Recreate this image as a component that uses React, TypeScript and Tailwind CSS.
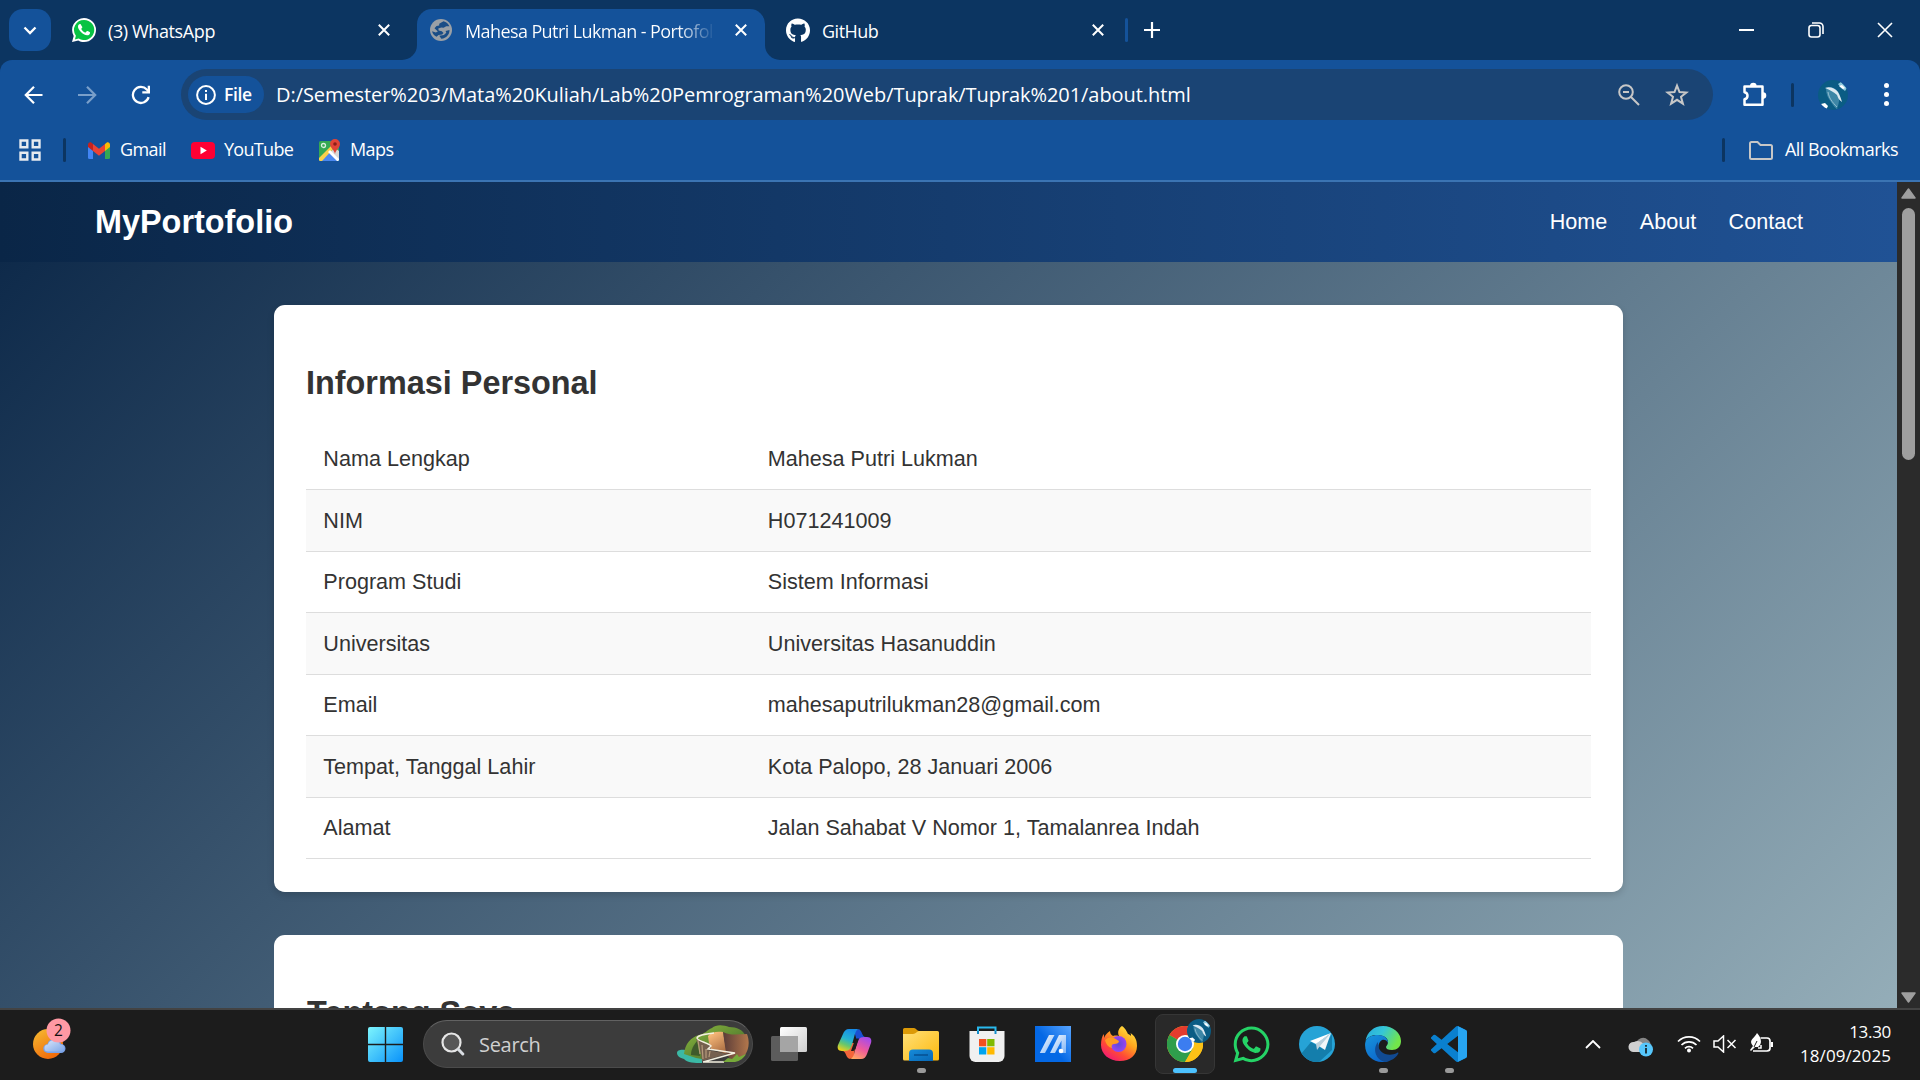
import type { ReactNode } from "react";
import { FaGithub, FaWhatsapp } from "react-icons/fa";

const UI = "font-['Open_Sans','Noto_Sans',sans-serif]";

const rows: [string, string][] = [
  ["Nama Lengkap", "Mahesa Putri Lukman"],
  ["NIM", "H071241009"],
  ["Program Studi", "Sistem Informasi"],
  ["Universitas", "Universitas Hasanuddin"],
  ["Email", "mahesaputrilukman28@gmail.com"],
  ["Tempat, Tanggal Lahir", "Kota Palopo, 28 Januari 2006"],
  ["Alamat", "Jalan Sahabat V Nomor 1, Tamalanrea Indah"],
];

function CloseGlyph({ className = "" }: { className?: string }) {
  return (
    <svg viewBox="0 0 12 12" className={`h-3 w-3 shrink-0 ${className}`}>
      <path d="M.8.8l10.4 10.4M11.2.8L.8 11.2" stroke="#fff" strokeWidth="2" />
    </svg>
  );
}

function WhatsAppTabIcon() {
  return (
    <svg viewBox="0 0 24 24" className="h-6 w-6 shrink-0">
      <path d="M12 0a12 12 0 0 1 0 24c-2.200 0-4-.5-5.700-1.500L0 24l1.700-6A12 12 0 0 1 12 0z" fill="#fff" />
      <path d="M12 1.900a10.100 10.100 0 1 1-5.300 18.600L2.900 21.400l1-3.700A10 10 0 0 1 12 1.900z" fill="#07c343" />
      <path d="M8.900 6.700c-.3-.6-.5-.6-.9-.6-.9 0-2 1-2 2.700 0 1.300.9 3 2.700 4.900 2 2.100 4.300 3.600 6.400 3.600 1.700 0 2.700-1.100 2.900-2.100.1-.5.100-.9-.1-1-.3-.2-2-1-2.400-1.200-.3-.1-.6-.1-.8.2l-1 1.200c-.2.200-.4.300-.7.100-1.500-.7-2.800-1.900-3.600-3.300-.2-.3-.1-.5.100-.7l.8-1c.1-.2.100-.4 0-.6z" fill="#fff" />
    </svg>
  );
}

function Globe() {
  return (
    <svg viewBox="0 0 22 22" className="h-[22px] w-[22px] shrink-0">
      <circle cx="11" cy="11" r="11" fill="#9aa0a6" />
      <path d="M13.500 2.300c2.800.7 4.800 2.400 5.900 5h-3.200l-2.600 1.500-2.300-.4-3 1.200.4 2 3.100.6 1.700 1.700-1.400 1.700-3.600.5-1.900 1.700c-2.500-1.200-4.100-3.200-4.500-5.600l3.700 1.200 2.100-1-3.400-3.100 2-2.400 2.700-.4V4.700z" fill="#1a4d86" />
      <path d="M9.300 16.800l4.600-.7 2.400-2.300-.7-1.700 3.900-1.200c.1 4.400-3 8.300-8.200 8.800z" fill="#1a4d86" />
    </svg>
  );
}

function Dolphin({ className = "" }: { className?: string }) {
  return (
    <svg viewBox="0 0 30 30" className={className}>
      <defs>
        <clipPath id="disc"><circle cx="15" cy="15" r="15" /></clipPath>
      </defs>
      <g clipPath="url(#disc)">
        <rect width="30" height="30" fill="#0a5c84" />
        <path d="M8 9c3-3 9-2 12 3 1 4 2 7 0 14-1 2-1 3 0 4-3-2-5-5-7-8-3-4-5-8-5-13z" fill="#3d86a6" />
        <path d="M7 8c4-2 10 0 13 4 2 3 3 7 4 10-3-2-4-4-5-7-3-3-7-5-12-7z" fill="#dbe9f1" />
        <path d="M10 12c1 6 4 10 9 15" stroke="#93bfd2" fill="none" strokeWidth="1" />
        <path d="M20 4l3-2 6 6-2 3-4-3z" fill="#8cc7dd" /><path d="M21 6l3-1 3 3-2 1z" fill="#fff" />
        <path d="M3 24l4-1 3 3-2 4-5-3z" fill="#fff" />
      </g>
    </svg>
  );
}

function Tabs() {
  return (
    <div className="flex h-[60px] w-full items-end text-[18px] text-white">
      <div className="ml-[9px] mb-[9px] flex h-[42px] w-[42px] items-center justify-center rounded-[14px] bg-[#14529a]">
        <svg viewBox="0 0 14 9" className="h-[9px] w-[14px]"><path d="M1.500 1.500L7 7l5.500-5.500" fill="none" stroke="#fff" strokeWidth="2.300" /></svg>
      </div>
      <div className="ml-[21px] flex h-[60px] w-[330px] items-center">
        <WhatsAppTabIcon />
        <span className="ml-3 w-[270px] whitespace-nowrap pt-[3px] tracking-[-0.38px]">(3) WhatsApp</span>
        <CloseGlyph />
      </div>
      <div className="h-[15px] w-[15px] bg-[#14529a]"><div className="h-full w-full rounded-br-[15px] bg-[#0c3561]" /></div>
      <div className="flex h-[51px] w-[348px] items-center rounded-t-[15px] bg-[#14529a] pl-[13px] pb-[9px]">
        <Globe />
        <span className="ml-[13px] w-[250px] overflow-hidden whitespace-nowrap bg-linear-to-r from-white from-85% to-transparent bg-clip-text pt-[3px] tracking-[-0.6px] text-transparent">Mahesa Putri Lukman - Portofolio</span>
        <CloseGlyph className="ml-5" />
      </div>
      <div className="h-[15px] w-[15px] bg-[#14529a]"><div className="h-full w-full rounded-bl-[15px] bg-[#0c3561]" /></div>
      <div className="ml-[6px] flex h-[60px] w-[318px] items-center">
        <FaGithub className="h-[25px] w-6" />
        <span className="ml-3 w-[270px] pt-[3px] tracking-[-0.5px]">GitHub</span>
        <CloseGlyph />
      </div>
      <div className="mb-[18px] ml-[21px] h-6 w-[3px] rounded bg-[#14529a]" />
      <svg viewBox="0 0 16 16" className="mb-[22px] ml-4 h-4 w-4"><path d="M8 0v16M0 8h16" stroke="#fff" strokeWidth="2.200" /></svg>
      <div className="mb-[18px] ml-auto mr-[27px] flex h-6 items-center">
        <div className="h-[2px] w-[15px] bg-white" />
        <svg viewBox="0 0 16 16" className="ml-[54px] h-4 w-4" fill="none" stroke="#fff" strokeWidth="1.600"><rect x="1" y="3.500" width="11" height="11.500" rx="2.500" /><path d="M4 1h7.500A3.500 3.500 0 0 1 15 4.500V12" /></svg>
        <svg viewBox="0 0 16 16" className="ml-[53px] h-4 w-4"><path d="M1 1l14 14M15 1L1 15" stroke="#fff" strokeWidth="1.600" /></svg>
      </div>
    </div>
  );
}

function Toolbar() {
  return (
    <div className="flex h-[69px] items-center text-white">
      <svg viewBox="0 0 20 20" className="ml-[24px] h-5 w-5" fill="none" stroke="#fff" strokeWidth="2.200"><path d="M18.500 10H2M10 1.800L1.800 10l8.200 8.200" /></svg>
      <svg viewBox="0 0 20 20" className="ml-[33px] h-5 w-5" fill="none" stroke="#799fca" strokeWidth="2.200"><path d="M1 10h17M10 1.800l8.200 8.200-8.200 8.200" /></svg>
      <svg viewBox="0 0 20 20" className="ml-[34px] h-5 w-5"><path d="M17.600 12.200A8 8 0 1 1 15.800 4.500L18 6.800" fill="none" stroke="#fff" strokeWidth="2.300" /><path d="M19 .8v7.700h-7.700V6.200h5.400V.8z" fill="#fff" /></svg>
      <div className="ml-[30px] flex h-[51px] w-[1532px] items-center rounded-full bg-[#1a4474]">
        <div className="ml-[7px] flex h-[37px] w-[76px] items-center rounded-full bg-[#14529a] pl-2">
          <svg viewBox="0 0 20 20" className="h-5 w-5"><circle cx="10" cy="10" r="8.900" fill="none" stroke="#fff" strokeWidth="2" /><path d="M9 8.800h2V15H9zM9 5h2v2H9z" fill="#fff" /></svg>
          <span className="ml-2 text-[17.500px] font-semibold tracking-[-0.4px]">File</span>
        </div>
        <span className="ml-[12px] w-[1342px] whitespace-nowrap text-[20px] tracking-[-0.07px]">D:/Semester%203/Mata%20Kuliah/Lab%20Pemrograman%20Web/Tuprak/Tuprak%201/about.html</span>
        <svg viewBox="0 0 22 22" className="h-[22px] w-[22px]" fill="none" stroke="#c7c7c7" strokeWidth="2"><circle cx="8" cy="8" r="6.800" /><path d="M13 13l8 8M5 8h6" /></svg>
        <svg viewBox="0 0 24 24" className="ml-[25px] h-6 w-6" fill="none" stroke="#c7c7c7" strokeWidth="2"><path d="M12 2.600l2.500 6.500 6.900.4-5.400 4.300 1.900 6.900L12 16.800l-5.900 3.900L8 13.800 2.600 9.500l6.900-.4z" /></svg>
      </div>
      <svg viewBox="0 0 26 26" className="ml-[28px] h-[26px] w-[26px]"><path d="M3.500 4.500h18v18.300h-18v-5.600c2-.4 3-1.700 3-3.500s-1-3.200-3-3.500z" fill="none" stroke="#fff" strokeWidth="2.500" strokeLinejoin="round" /><path d="M9 4a3.300 3.300 0 0 1 6.600 0zM22 10.300a3.300 3.300 0 0 1 0 6.600z" fill="#fff" /></svg>
      <div className="ml-[24px] h-6 w-[3px] rounded bg-[#0c3561]" />
      <Dolphin className="ml-[24px] h-[30px] w-[30px]" />
      <div className="ml-[36px] flex flex-col gap-[4px]">
        <i className="h-[5px] w-[5px] rounded-full bg-white" /><i className="h-[5px] w-[5px] rounded-full bg-white" /><i className="h-[5px] w-[5px] rounded-full bg-white" />
      </div>
    </div>
  );
}

function Bookmarks() {
  return (
    <div className="flex h-[42px] items-center text-[18px] tracking-[-0.6px] text-white">
      <svg viewBox="0 0 22 22" className="ml-[19px] h-[22px] w-[22px]" fill="none" stroke="#e6eaf0" strokeWidth="2.400"><path d="M1.500 1.500h6.800v6.800H1.500zM13.700 1.500h6.800v6.800h-6.800zM1.500 13.700h6.800v6.800H1.500zM13.700 13.700h6.800v6.800h-6.800z" /></svg>
      <div className="ml-[22px] h-6 w-[3px] rounded bg-[#0c3561]" />
      <svg viewBox="0 0 22 17" className="ml-[22px] h-[17px] w-[22px]">
        <path d="M0 3v12.300A1.500 1.500 0 0 0 1.500 17H5V7z" fill="#4285f4" /><path d="M17 7v10h3.500a1.500 1.500 0 0 0 1.500-1.500V3z" fill="#34a853" />
        <path d="M0 2.800V5l5 4V2L3.500.7C2-.5 0 .6 0 2.800z" fill="#c5221f" /><path d="M17 2v7l5-4V2.800C22 .6 20-.5 18.500.7z" fill="#fbbc04" /><path d="M5 9V2l6 4.700L17 2v7l-6 4.700z" fill="#ea4335" />
      </svg>
      <span className="ml-[10px] w-[71px] pb-px">Gmail</span>
      <svg viewBox="0 0 24 17" className="h-[17px] w-6"><rect width="24" height="17" rx="4" fill="#ff0033" /><path d="M9.500 4.800l6.300 3.700-6.300 3.700z" fill="#fff" /></svg>
      <span className="ml-[9px] w-[95px] pb-px tracking-[-0.7px]">YouTube</span>
      <svg viewBox="0 0 22 22" className="h-[22px] w-[22px]">
        <defs><clipPath id="mapc"><rect x="0" y="2" width="20" height="20" rx="1.500" /></clipPath></defs>
        <g clipPath="url(#mapc)"><rect y="2" width="20" height="20" fill="#35a853" /><path d="M0 22L10 12l10 10z" fill="#4a87ee" /><path d="M11 13l5-4 4 3v9z" fill="#d8d8d8" /><path d="M0 19L14 5l2 3L3 22H0z" fill="#fbd04a" /><path d="M9 13l9 9h2v-2L11 11z" fill="#fff" /></g>
        <circle cx="4.500" cy="6.500" r="2" fill="none" stroke="#d9f0de" strokeWidth="1.300" />
        <path d="M16 0a5 5 0 0 1 5 5c0 4-4 5-5 10-1-5-5-6-5-10a5 5 0 0 1 5-5z" fill="#e04437" /><circle cx="16" cy="5" r="1.800" fill="#8b1e19" />
      </svg>
      <span className="ml-[9px] pb-px">Maps</span>
      <div className="ml-auto h-6 w-[3px] rounded bg-[#0c3561]" />
      <svg viewBox="0 0 24 19" className="ml-6 h-[19px] w-6" fill="none" stroke="#c7c7c7" strokeWidth="2"><path d="M1 2.500A1.500 1.500 0 0 1 2.500 1h6l3 3h10A1.500 1.500 0 0 1 23 5.500v11a1.500 1.500 0 0 1-1.500 1.500h-19A1.500 1.500 0 0 1 1 16.500z" /></svg>
      <span className="ml-3 mr-[22px] w-[113px] whitespace-nowrap pb-px tracking-[-0.54px]">All Bookmarks</span>
    </div>
  );
}

function Page() {
  return (
    <div className="flex h-[826px] w-full">
      <div className="h-full w-[1897px] overflow-hidden bg-[linear-gradient(135deg,#0a2647,#94adb8)] font-['Liberation_Sans',Arial,sans-serif] text-[21.6px] text-[#333]">
        <header className="flex h-20 items-center justify-between bg-[linear-gradient(90deg,#0a2647,#205295)] pr-[94px] pl-[95px] text-white">
          <h1 className="text-[32.4px] font-bold">MyPortofolio</h1>
          <nav className="flex gap-[32.4px]"><a>Home</a><a>About</a><a>Contact</a></nav>
        </header>
        <section className="mr-auto ml-[274px] mt-[43px] h-[587px] w-[1349px] rounded-[10.8px] bg-white px-8 pt-[52px] shadow-[0_3px_7px_rgba(0,0,0,0.15)]">
          <h2 className="h-[71.5px] text-[32.4px] leading-[52px] font-bold">Informasi Personal</h2>
          <div>
            {rows.map(([label, value]) => (
              <div key={label} className="flex h-[61.5px] items-center border-b border-[#ddd] pt-px even:bg-[#f9f9f9]">
                <span className="w-[444.5px] pl-[17.3px]">{label}</span>
                <span className="pl-[17.3px]">{value}</span>
              </div>
            ))}
          </div>
        </section>
        <section className="ml-[274px] mt-[43px] h-[400px] w-[1349px] rounded-[10.8px] bg-white px-[33px] pt-[52px]">
          <h2 className="text-[32.4px] leading-[52px] font-bold">Tentang Saya</h2>
        </section>
      </div>
      <div className="flex h-full w-[23px] flex-col items-center bg-[#2b2b2b] pt-[6px]">
        <svg viewBox="0 0 15 11" className="h-[11px] w-[15px]"><path d="M7.500 1L14 10H1z" fill="#9f9f9f" stroke="#9f9f9f" strokeWidth="1.500" strokeLinejoin="round" /></svg>
        <div className="mt-[9px] h-[252px] w-[13px] rounded-full bg-[#9f9f9f]" />
        <svg viewBox="0 0 15 11" className="mt-auto mb-[5px] h-[11px] w-[15px]"><path d="M7.500 10L1 1h13z" fill="#9f9f9f" stroke="#9f9f9f" strokeWidth="1.500" strokeLinejoin="round" /></svg>
      </div>
    </div>
  );
}

function App36({ children, mark }: { children: ReactNode; mark?: boolean }) {
  return (
    <div className="flex h-[60px] w-[66px] flex-col items-center pt-3">
      <svg viewBox="0 0 36 36" className="h-9 w-9">{children}</svg>
      {mark && <div className="mt-[6px] h-[5px] w-[9px] rounded-full bg-[#9a9a9a]" />}
    </div>
  );
}

function SearchArt() {
  return (
    <svg viewBox="0 0 72 38" className="h-[38px] w-[72px]">
      <defs>
        <linearGradient id="cliffA" x1=".3" x2=".8" y2="1"><stop stopColor="#fbbd7c" /><stop offset="1" stopColor="#a5683f" /></linearGradient>
        <linearGradient id="cliffB" x1="0" x2="1"><stop stopColor="#5a3c38" /><stop offset="1" stopColor="#b3774c" /></linearGradient>
        <linearGradient id="hill" x1="0" x2="1" y2="1"><stop stopColor="#8fbc3e" /><stop offset="1" stopColor="#39602a" /></linearGradient>
      </defs>
      <path d="M0 28c0-4 7-4 11-2l14 7v5c-7 0-15 0-18-4-4-1-7-3-7-6z" fill="#3bb9a5" />
      <path d="M7 29C8 19 14 12 22 10c6-1 8-5 13-7 4-4 12-3 17-1 8 0 14 3 16 8l-20 0-18 10-5 14-6-1z" fill="url(#hill)" />
      <path d="M14 30c0-6 3-10 6-14l3 15z" fill="#3f5a2b" />
      <path d="M31 11c3-4 9-5 15-4l4 22-16-5-2-6z" fill="url(#cliffA)" />
      <path d="M46 7c8 4 16 2 24 2 3 8 2 16-3 22-3 3-7 5-12 6l-6-9z" fill="url(#cliffB)" />
      <path d="M19 13l14 8-2 4 20 4-26 7-1-8z" fill="#75604f" />
      <path d="M21 15l2 14M25 20l1 14M29 24v9M33 26l-1 6" stroke="#b79b7c" strokeWidth="1.200" />
      <path d="M37 8c-8 1-16 2-17 5 0 3 12 5 14 8l-3 3 27 4-32 9h21" fill="none" stroke="#f3efdf" strokeWidth="1.500" />
      <path d="M46 37l5-4 4 1 5-5 2 3 7-3c-2 4-6 7-11 8z" fill="#76a93a" />
    </svg>
  );
}

function Taskbar() {
  return (
    <div className={`flex h-[72px] w-full border-t-2 border-[#434343] bg-[#1c1c1c] pt-1 ${UI}`}>
      <svg viewBox="0 0 44 54" className="ml-[30px] h-[54px] w-[44px]">
        <defs>
          <linearGradient id="sun" x1="0" y1="0" x2=".6" y2="1"><stop stopColor="#f6bd32" /><stop offset="1" stopColor="#f06a0a" /></linearGradient>
          <linearGradient id="cloud" y2="1"><stop stopColor="#dbe7fb" /><stop offset="1" stopColor="#7da6e8" /></linearGradient>
        </defs>
        <circle cx="18" cy="30" r="15" fill="url(#sun)" />
        <path d="M18 39a4.500 4.500 0 0 1-.5-9c1-4 4-5 7-5s6 2 6.500 5a4.500 4.500 0 0 1 0 9z" fill="#7ba3e8" />
        <path d="M18 37.500a3.500 3.500 0 0 1 0-7c1-3.500 4-4.500 6.500-4.500s5 2 5.500 4.500a3.500 3.500 0 0 1 1 7z" fill="url(#cloud)" />
        <circle cx="28.500" cy="16.500" r="12" fill="#ff99a4" />
        <text x="28.500" y="22" textAnchor="middle" fontSize="15.500" fill="#111">2</text>
      </svg>
      <svg viewBox="0 0 35 35" className="mt-[13px] ml-[294px] h-[35px] w-[35px]">
        <defs><linearGradient id="win" gradientUnits="userSpaceOnUse" x1="0" y1="0" x2="35" y2="35"><stop stopColor="#7df5fd" /><stop offset="1" stopColor="#0992fa" /></linearGradient></defs>
        <g fill="url(#win)"><path d="M2 0h14.800v16.800H0V2a2 2 0 0 1 2-2zM18.200 0H33a2 2 0 0 1 2 2v14.800H18.200zM0 18.200h16.800V35H2a2 2 0 0 1-2-2zM18.200 18.200H35V33a2 2 0 0 1-2 2H18.200z" /></g>
      </svg>
      <div className="mt-[6px] ml-5 flex h-12 w-[330px] items-center rounded-full border-[1.5px] border-[#4b4b4b] border-t-[#626262] bg-[#3c3c3c]">
        <svg viewBox="0 0 24 24" className="ml-[17px] h-6 w-6"><circle cx="10.500" cy="10.500" r="9" fill="#575757" stroke="#e6e6e6" strokeWidth="2.200" /><path d="M17.300 17.300l4.500 4.700" stroke="#d9dde2" strokeWidth="3" strokeLinecap="round" /></svg>
        <span className="ml-[14px] w-[198px] pt-px text-[20px] tracking-[-0.3px] text-[#d0d0d0]">Search</span>
        <SearchArt />
      </div>
      <div className="ml-[3px] flex">
        <App36>
          <defs><linearGradient id="tv" x2="1" y2="1"><stop stopColor="#fff" /><stop offset="1" stopColor="#cfcfcf" /></linearGradient></defs>
          <rect x="9" y="1" width="27" height="25" rx="1.500" fill="url(#tv)" /><rect x="0" y="10" width="27" height="25" rx="1.500" fill="#6d6d6d" fillOpacity=".8" /><path d="M9 10h18v16H9z" fill="#a5a5a5" />
        </App36>
        <App36>
          <defs>
            <linearGradient id="cp1" x1=".6" x2=".2" y2="1"><stop stopColor="#168be8" /><stop offset=".45" stopColor="#25b3cf" /><stop offset=".7" stopColor="#68c76c" /><stop offset="1" stopColor="#f6d018" /></linearGradient>
            <linearGradient id="cp2" x1=".7" x2=".2" y2="1"><stop stopColor="#a64bea" /><stop offset=".5" stopColor="#ee5a9c" /><stop offset="1" stopColor="#ffa960" /></linearGradient>
          </defs>
          <path d="M23 3h-3c6 0 4 8 9 8-2 0-3 2-4 4h-5L17 5z" fill="#1a50d2" />
          <path d="M11 33h3c-6 0-4-8-9-8 4 0 6-4 8-8l5 0-1 15z" fill="#f3653a" />
          <path d="M12 3h10c-4 1-4 6-6 12-2 7-3 10-8 10H5c-4 0-5-3-4-6L6 8c1-3 3-5 6-5z" fill="url(#cp1)" />
          <path d="M24 33H13c4-1 4-6 6-12 2-7 3-10 8-10h3c4 0 5 3 4 6l-4 11c-1 3-3 5-6 5z" fill="url(#cp2)" />
          <path d="M17.500 15l2-2.500h2.500l-3.500 10-2 2.500H14z" fill="#1c1c1c" />
        </App36>
        <App36 mark>
          <defs><linearGradient id="fold" x2="1" y2="1"><stop stopColor="#ffe078" /><stop offset="1" stopColor="#fdb90e" /></linearGradient><linearGradient id="fb" y2="1"><stop stopColor="#168bd9" /><stop offset="1" stopColor="#0868b6" /></linearGradient></defs>
          <path d="M0 3.500A1.500 1.500 0 0 1 1.500 2H11c2 0 3 3 5 3v5H0z" fill="#dc9a07" /><path d="M0 8h10c3 0 4-3 6-3h18.500A1.500 1.500 0 0 1 36 6.500V33a1.500 1.500 0 0 1-1.500 1.500h-33A1.500 1.500 0 0 1 0 33z" fill="url(#fold)" />
          <path d="M6 35V27.500A4 4 0 0 1 10 23.500h16a4 4 0 0 1 4 4V35z" fill="url(#fb)" /><path d="M11 29h14" stroke="#064f91" strokeWidth="1.500" />
        </App36>
        <App36>
          <path d="M9 5V1.500h17.500V5" fill="none" stroke="#29b9ed" strokeWidth="2" /><path d="M.5 5h35v25a6 6 0 0 1-6 6h-23a6 6 0 0 1-6-6z" fill="#f0f0f0" /><path d="M9 5v3M26.500 5v3" stroke="#138bc9" strokeWidth="2" />
          <path d="M10 13h7.300v7.300H10z" fill="#f25022" /><path d="M18.200 13h7.300v7.300h-7.300z" fill="#7fba00" /><path d="M10 21.200h7.300v7.300H10z" fill="#00a4ef" /><path d="M18.200 21.200h7.300v7.300h-7.300z" fill="#ffb900" />
        </App36>
        <App36>
          <defs><linearGradient id="asus" x1="1" x2=".4" y2=".5"><stop stopColor="#58a5ff" /><stop offset="1" stopColor="#0468e5" /></linearGradient><linearGradient id="aw" y2="1"><stop stopColor="#fff" /><stop offset="1" stopColor="#7fb4f5" /></linearGradient></defs>
          <path d="M0 0h36v36H0z" fill="url(#asus)" /><path d="M14 9h5.500L10 27H4.800z" fill="url(#aw)" /><path d="M24 9h7v18h-4.500V14.500L20 27h-5z" fill="url(#aw)" /><circle cx="26" cy="25" r="2.300" fill="#fff" />
        </App36>
        <App36>
          <defs><linearGradient id="ff" x1=".9" x2=".2" y2="1"><stop stopColor="#fff04a" /><stop offset=".4" stopColor="#ffa51e" /><stop offset=".7" stopColor="#ff4b35" /><stop offset="1" stopColor="#ef127d" /></linearGradient><radialGradient id="fp"><stop stopColor="#6048d8" /><stop offset="1" stopColor="#9745f2" /></radialGradient></defs>
          <path d="M21 0c4 3 5 6 6 8 1 0 2 1 3 2 0-1 0-2-.5-3C34 10 36 14 36 20c0 9-7 15-17 15C8 35 0 28 0 19c0-5 1-9 3-11v4c1-3 3-5 6-7 0 2 1 4 3 5 3-1 6 0 6 0-2-4 0-8 3-10z" fill="url(#ff)" />
          <circle cx="17.500" cy="18" r="8" fill="url(#fp)" /><path d="M4 14c3-3 6-3 9-2l5 3c0 2-2 3-5 3-2 0-3 2-2 4-4-1-6-4-7-8z" fill="#ff9a22" />
        </App36>
      </div>
      <div className="mx-[3px] flex h-[60px] w-[60px] flex-col items-center rounded-lg border border-[#363636] bg-[#292929] pt-[11px]">
        <div className="relative h-9 w-9">
          <svg viewBox="0 0 36 36" className="h-9 w-9">
            <circle cx="18" cy="18" r="18" fill="#fbc116" /><path d="M18 18L2.400 9A18 18 0 0 1 33.600 9H18z" fill="#e33b2e" /><path d="M2.400 9a18 18 0 0 0 15.600 27l8-13.500L18 18z" fill="#2f9e4c" /><path d="M18 9h15.600A18 18 0 0 1 18 36l7.800-13.500z" fill="#fbc116" /><circle cx="18" cy="18" r="9" fill="#fff" /><circle cx="18" cy="18" r="7.200" fill="#3c7df0" />
          </svg>
          <Dolphin className="absolute top-[-7px] left-[20px] h-6 w-6" />
        </div>
        <div className="mt-[6px] h-[5px] w-6 rounded-full bg-[#4cc2ff]" />
      </div>
      <div className="flex">
        <div className="flex h-[60px] w-[66px] items-center justify-center"><FaWhatsapp className="h-[41px] w-[41px] text-[#25d366]" /></div>
        <App36>
          <defs><clipPath id="tg"><circle cx="18" cy="18" r="18" /></clipPath></defs>
          <circle cx="18" cy="18" r="18" fill="#26a3d6" /><path clipPath="url(#tg)" d="M12 16L2 28l4 8h14l13-12V8l-9 15z" fill="#147eac" /><path d="M32 7L11 15l6 3z" fill="#fff" /><path d="M32 7L17 18l9 6z" fill="#f1f6f9" /><path d="M32 7L17 18l1 6 3-4z" fill="#b8d0dd" />
        </App36>
        <App36 mark>
          <defs><linearGradient id="e1" x2="1" y2=".4"><stop stopColor="#26a9df" /><stop offset=".5" stopColor="#35c6d7" /><stop offset="1" stopColor="#72e54a" /></linearGradient><linearGradient id="e2" x2=".6" y2="1"><stop stopColor="#1795dc" /><stop offset="1" stopColor="#0c66cc" /></linearGradient></defs>
          <path d="M.5 15C2 6 9 0 18 0c10 0 18 7 18 15 0 6-4 9-9 9-4 0-6-1-6-3 0-1 2-2 2-5C23 8 5 6 .5 15z" fill="url(#e1)" />
          <path d="M.2 17C1 11 7 9 13 9c7 0 10 4 10 8-1-3-4-4-6-3-6 3-5 18 7 21-3 1-5 1-7 1C7 36-1 28 .2 17z" fill="url(#e2)" />
          <path d="M13 16c-6 7-2 18 7 20 6-1 11-4 13-8 1-1 0-2-1-1-8 4-20 1-19-11z" fill="#114a92" />
        </App36>
        <App36 mark>
          <g transform="scale(1.500)"><path d="M23.150 2.587L18.210.21a1.494 1.494 0 0 0-1.705.29l-9.460 8.630-4.120-3.128a.999.999 0 0 0-1.276.057L.327 7.261A1 1 0 0 0 .326 8.740L3.899 12 .326 15.260a1 1 0 0 0 .001 1.479L1.650 17.940a.999.999 0 0 0 1.276.057l4.120-3.128 9.460 8.630a1.492 1.492 0 0 0 1.704.290l4.942-2.377A1.500 1.500 0 0 0 24 20.060V3.939a1.500 1.500 0 0 0-.850-1.352zm-5.146 14.861L10.826 12l7.178-5.448v10.896z" fill="#0a80cf" /><path d="M18 .15l5.150 2.437A1.500 1.500 0 0 1 24 3.939V20.060a1.500 1.500 0 0 1-.85 1.352L18 23.850z" fill="#27a5f2" /></g>
        </App36>
      </div>
      <div className="mr-[29px] ml-auto flex h-[60px] items-center">
        <svg viewBox="0 0 16 9" className="h-[9px] w-4"><path d="M1 8l7-7 7 7" fill="none" stroke="#fff" strokeWidth="1.800" /></svg>
        <svg viewBox="0 0 26 22" className="mt-1 ml-[27px] h-[22px] w-[26px]">
          <path d="M8 9a7 7 0 0 1 12-4 6 6 0 0 1 0 10H9z" fill="#858585" /><path d="M5 17a5 5 0 0 1 1-10c5-3 10 1 10 4l-3 6z" fill="#d0d0d0" /><circle cx="18" cy="14.500" r="7" fill="#56c6fb" /><path d="M18 13v5.500M18 10v1.700" stroke="#111" strokeWidth="1.600" />
        </svg>
        <svg viewBox="0 0 24 18" className="ml-[23px] h-[18px] w-6" fill="none" stroke="#fff" strokeWidth="1.700"><path d="M1 6.500a15.500 15.500 0 0 1 22 0M4.500 10a10.600 10.600 0 0 1 15 0M8 13.300a5.600 5.600 0 0 1 8 0" /><circle cx="12" cy="15.500" r="2" fill="#fff" stroke="none" /></svg>
        <svg viewBox="0 0 24 18" className="ml-3 h-[18px] w-6" fill="none" stroke="#fff" strokeWidth="1.500"><path d="M1 6v6h4l5.500 5V1L5 6zM14.500 5l8 8M22.500 5l-8 8" /></svg>
        <svg viewBox="0 0 25 21" className="mt-[-3px] ml-3 h-[21px] w-[25px]"><path d="M11.500 6H18a3 3 0 0 1 3 3v7a3 3 0 0 1-3 3H4" fill="none" stroke="#fff" strokeWidth="1.700" /><path d="M22 10h2v5h-2z" fill="#fff" /><path d="M8 1c4 4 6 11 1 14H6l-4 4-1-1 3-4C-1 8 5 7 8 1z" fill="#fff" /><path d="M5 15l3-6" stroke="#1c1c1c" /><path d="M12 13v3H9" stroke="#fff" fill="none" strokeWidth="1.500" /></svg>
        <div className="ml-[12px] w-[105px] text-right text-[17px] leading-[24px] tracking-[0.08px] text-white"><div className="tracking-[-0.3px]">13.30</div><div>18/09/2025</div></div>
      </div>
    </div>
  );
}

export default function App() {
  return (
    <div className="flex h-[1080px] w-[1920px] flex-col overflow-hidden bg-[#0c3561]">
      <div className={`h-[182px] ${UI}`}>
        <Tabs />
        <div className="h-[122px] rounded-t-xl border-b-2 border-[#3b74b3] bg-[#14529a]">
          <Toolbar />
          <Bookmarks />
        </div>
      </div>
      <Page />
      <Taskbar />
    </div>
  );
}
